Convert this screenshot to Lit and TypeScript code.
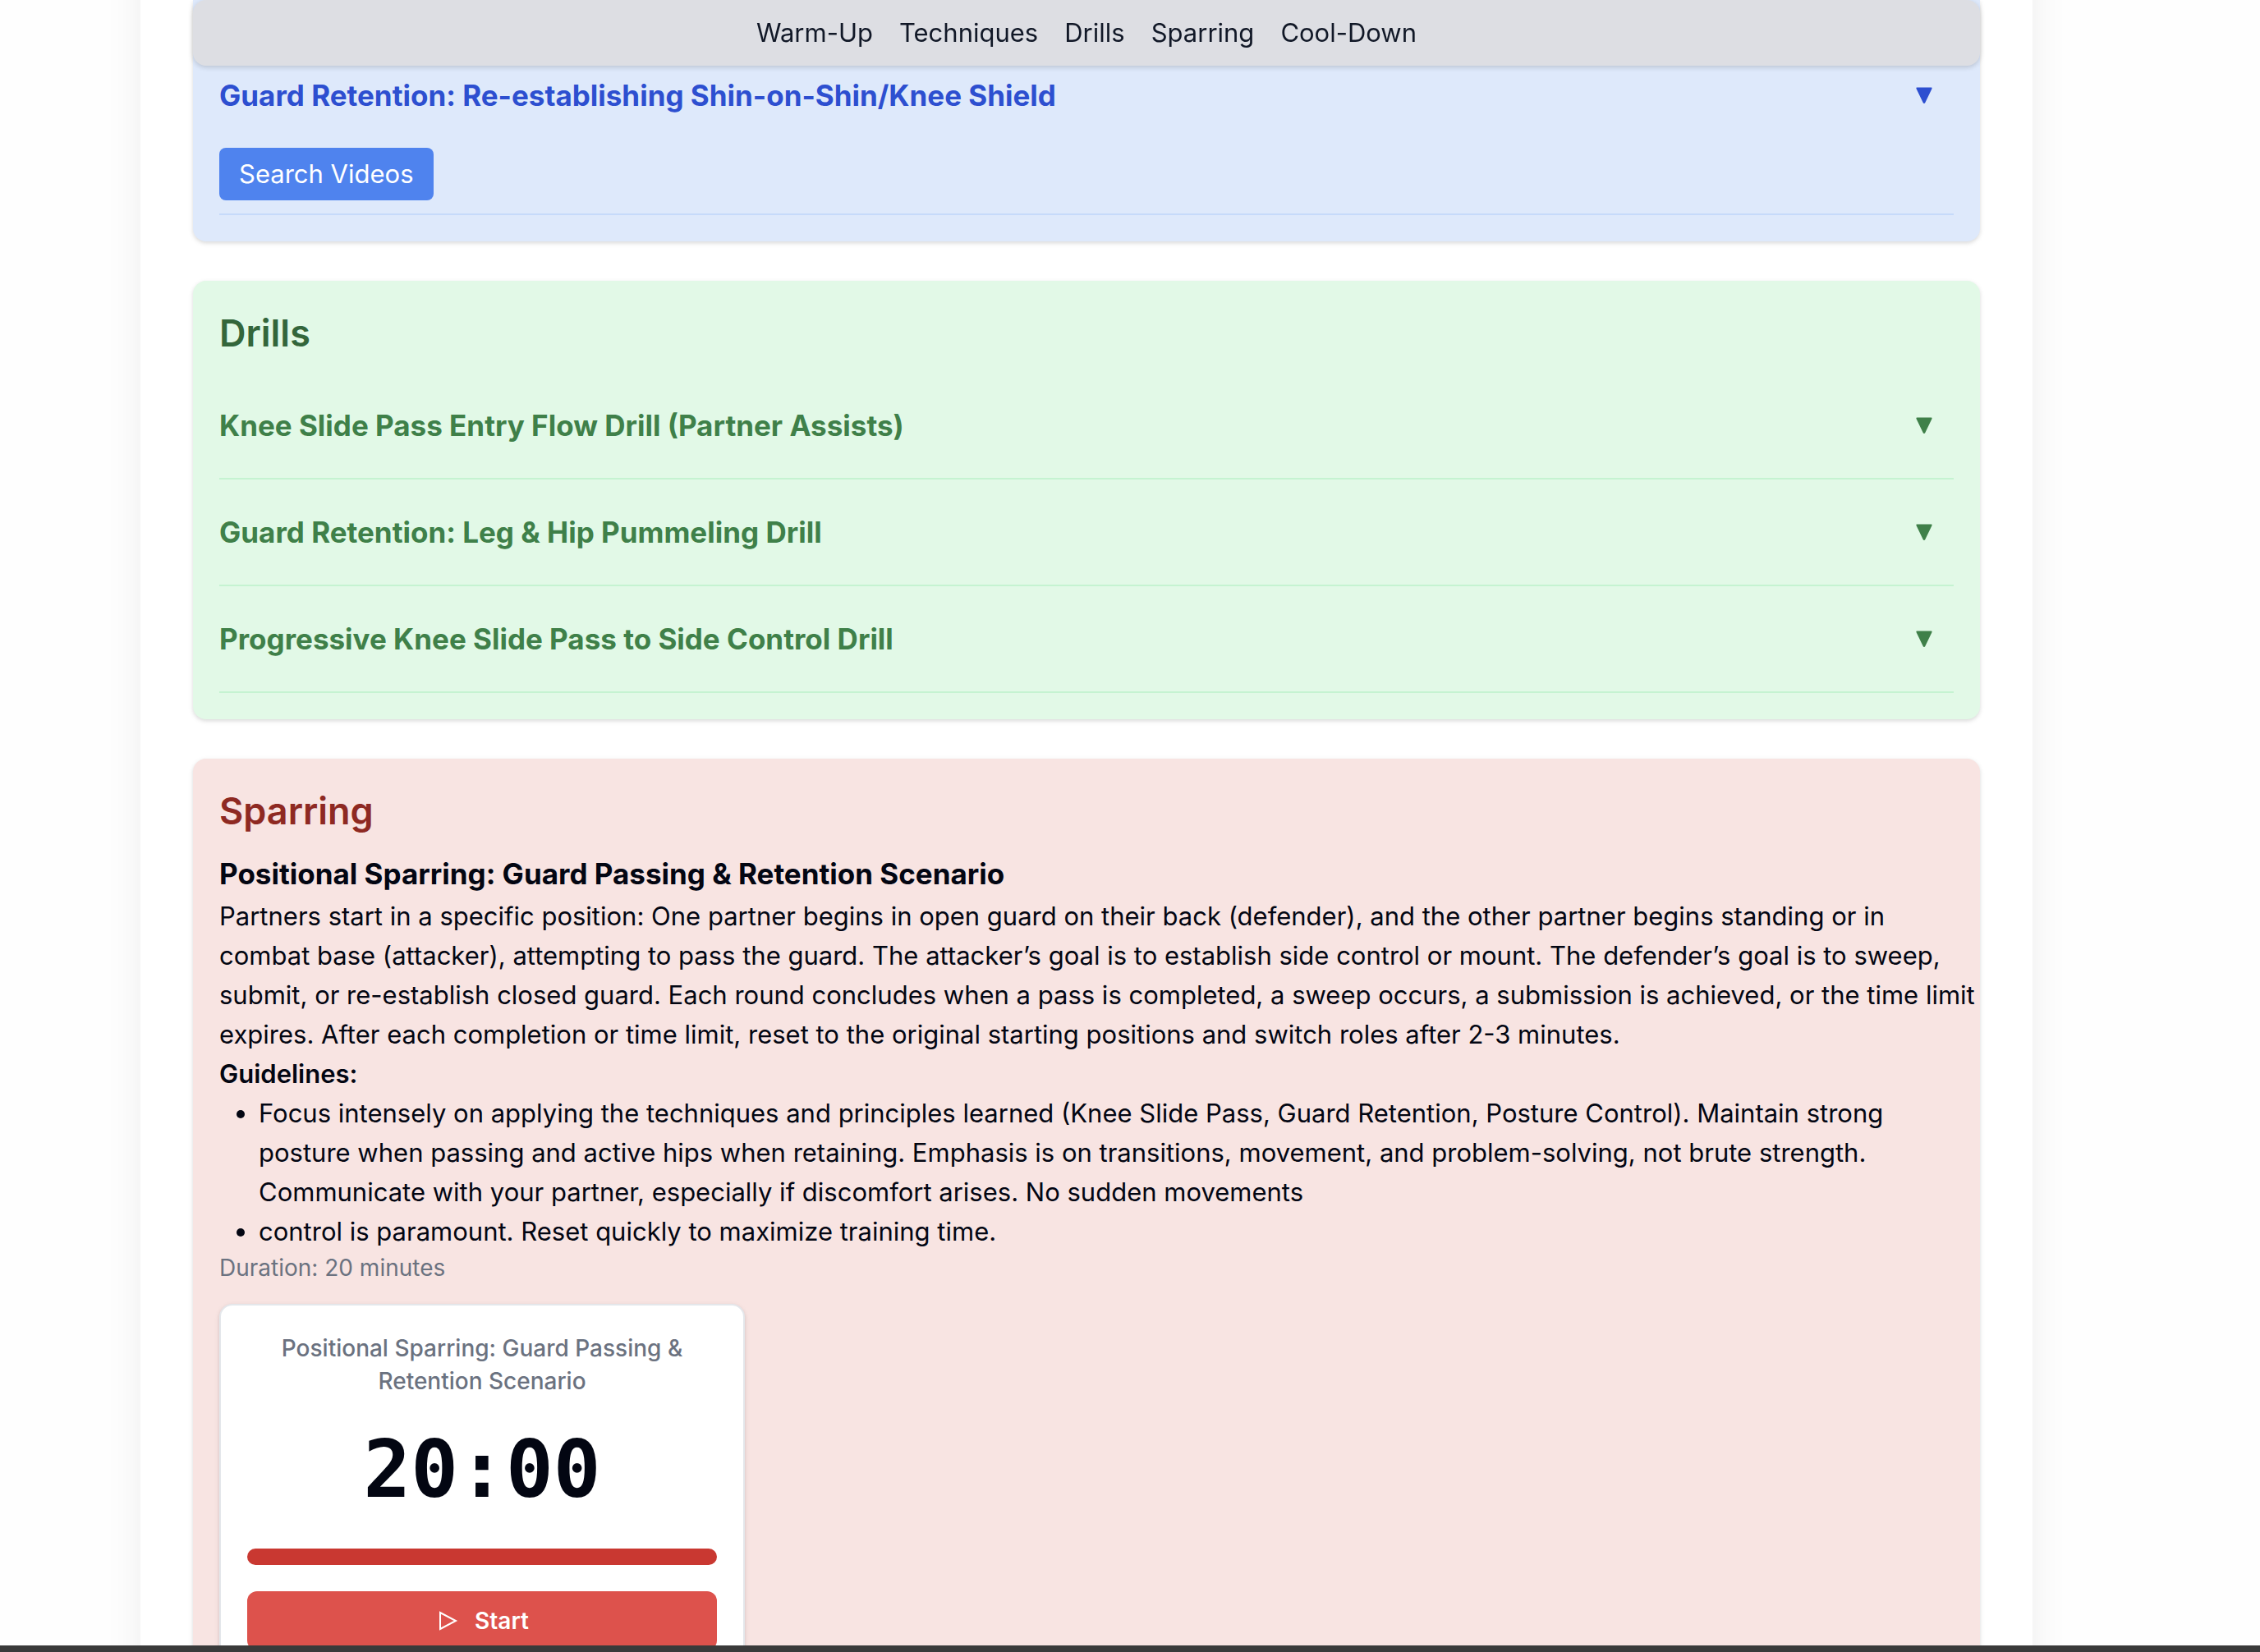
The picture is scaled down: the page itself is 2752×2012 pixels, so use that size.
import { LitElement, html, css, svg } from "lit";
import { customElement, property } from "lit/decorators.js";

const NAV = ["Warm-Up", "Techniques", "Drills", "Sparring", "Cool-Down"];

const DRILLS = [
  "Knee Slide Pass Entry Flow Drill (Partner Assists)",
  "Guard Retention: Leg & Hip Pummeling Drill",
  "Progressive Knee Slide Pass to Side Control Drill",
];

const GUIDELINES = [
  "Focus intensely on applying the techniques and principles learned (Knee Slide Pass, Guard Retention, Posture Control). Maintain strong posture when passing and active hips when retaining. Emphasis is on transitions, movement, and problem-solving, not brute strength. Communicate with your partner, especially if discomfort arises. No sudden movements",
  "control is paramount. Reset quickly to maximize training time.",
];

const triangle = svg`<path d="M3.4 2.500h17.200a1 1 0 0 1 .9 1.400l-8.300 17.400a1.300 1.300 0 0 1-2.400 0L2.500 3.900a1 1 0 0 1 .9-1.400z" fill="currentColor" />`;

@customElement("accordion-item")
export class AccordionItem extends LitElement {
  @property() heading = "";

  static styles = css`
    :host {
      display: block;
      border-bottom: 2px solid var(--rule);
      color: var(--accent);
    }
    .title {
      margin: 0;
      font-size: inherit;
    }
    .toggle {
      display: flex;
      align-items: center;
      justify-content: space-between;
      width: 100%;
      padding: 36px 24px 36px 0;
      border: 0;
      background: none;
      color: inherit;
      font: 700 35px/56px var(--sans);
      text-align: left;
      cursor: pointer;
    }
    .arrow {
      flex: none;
      width: 24px;
      height: 24px;
    }
  `;

  render() {
    return html`
      <h3 class="title">
        <button class="toggle" type="button">
          <span>${this.heading}</span>
          <svg class="arrow" viewBox="0 0 24 24" aria-hidden="true">${triangle}</svg>
        </button>
      </h3>
      <slot></slot>
    `;
  }
}

@customElement("round-timer")
export class RoundTimer extends LitElement {
  @property() label = "";
  @property({ type: Number }) seconds = 0;

  static styles = css`
    :host {
      display: block;
      box-sizing: border-box;
      max-width: 640px;
      padding: 32px;
      border: 2px solid #e4e7eb;
      border-radius: 16px;
      background: #fff;
      box-shadow: 0 2px 6px rgba(0, 0, 0, 0.1), 0 2px 4px rgba(0, 0, 0, 0.06);
      text-align: center;
    }
    .label {
      margin: 0 0 40px;
      padding: 0 32px;
      color: #6b7280;
      font-size: 28px;
      font-weight: 500;
      line-height: 40px;
    }
    .clock {
      margin-bottom: 48px;
      font: 700 96px/96px "DejaVu Sans Mono", monospace;
    }
    .bar {
      height: 20px;
      margin-bottom: 32px;
      border-radius: 10px;
      background: #c93831;
    }
    .start {
      display: flex;
      align-items: center;
      justify-content: center;
      gap: 16px;
      width: 100%;
      height: 72px;
      border: 0;
      border-radius: 12px;
      background: #dd524c;
      color: #fff;
      font: 600 28px/40px var(--sans);
      cursor: pointer;
    }
    .icon {
      width: 32px;
      height: 32px;
    }
  `;

  render() {
    const pad = (n: number) => String(n).padStart(2, "0");
    const time = `${pad(Math.floor(this.seconds / 60))}:${pad(this.seconds % 60)}`;
    return html`
      <p class="label">${this.label}</p>
      <div class="clock" role="timer">${time}</div>
      <div class="bar"></div>
      <button class="start" type="button">
        <svg class="icon" viewBox="0 0 32 32" fill="none" stroke="currentColor" stroke-width="2" aria-hidden="true">
          <path d="M6 6V26L25 16z" />
        </svg>
        Start
      </button>
    `;
  }
}

@customElement("app-root")
export class AppRoot extends LitElement {
  static styles = css`
    :host {
      --sans: Inter, "Liberation Sans", sans-serif;
      display: flex;
      flex-direction: column;
      height: 100vh;
      overflow: hidden;
      background: #fefefe;
      color: #030612;
      font: 400 31px/48px var(--sans);
    }
    .page {
      flex: 1;
      min-height: 0;
      overflow: hidden;
      padding-right: 106px;
    }
    .dock {
      flex: none;
      height: 8px;
      background: #3a3a3a;
    }
    .sheet {
      box-sizing: border-box;
      max-width: 2304px;
      margin: -96px auto 0;
      padding: 96px 64px 64px;
      background: #fff;
      box-shadow: 0 0 50px -10px rgba(0, 0, 0, 0.1);
    }
    .nav {
      position: sticky;
      top: 0;
      z-index: 1;
      display: flex;
      justify-content: center;
      gap: 32px;
      padding: 16px;
      border-radius: 16px;
      background: #dddee3;
      box-shadow: 0 2px 6px rgba(0, 0, 0, 0.12), 0 2px 8px rgba(0, 0, 0, 0.06);
    }
    .link {
      color: #111827;
      text-decoration: none;
    }
    .card {
      margin-bottom: 48px;
      padding: 32px;
      border-radius: 16px;
      box-shadow: 0 2px 6px rgba(0, 0, 0, 0.1), 0 2px 4px rgba(0, 0, 0, 0.06);
    }
    .techniques {
      --accent: #2d4fd0;
      --rule: #c6dafa;
      margin-top: -80px;
      padding-top: 52px;
      border-radius: 0 0 16px 16px;
      background: #dee9fb;
    }
    .drills {
      --accent: #3f8049;
      --rule: #c5f3d1;
      background: #e2f9e7;
    }
    .sparring {
      background: #f8e4e2;
    }
    .heading {
      margin: 0 0 16px;
      font-size: 45px;
      font-weight: 600;
      line-height: 64px;
    }
    .drills .heading {
      color: #33663b;
    }
    .sparring .heading {
      color: #8e2922;
    }
    .search {
      display: block;
      margin-bottom: 16px;
      padding: 8px 24px;
      border: 0;
      border-radius: 8px;
      background: #4f83ee;
      color: #fff;
      font: 400 31px/48px var(--sans);
      cursor: pointer;
    }
    .subheading {
      margin: 0;
      font-size: 35px;
      font-weight: 700;
      line-height: 56px;
    }
    .text {
      margin: 0 -32px 0 0;
    }
    .strong {
      margin: 0;
      font-size: inherit;
      font-weight: 600;
    }
    .list {
      margin: 0;
      padding-left: 48px;
    }
    .duration {
      margin: 0 0 24px;
      color: #6b7280;
      font-size: 28px;
      line-height: 40px;
    }
  `;

  render() {
    return html`
      <main class="page">
        <div class="sheet">
          <nav class="nav">
            ${NAV.map((n) => html`<a class="link" href="#${n.toLowerCase()}">${n}</a>`)}
          </nav>
          <section class="card techniques" id="techniques">
            <accordion-item heading="Guard Retention: Re-establishing Shin-on-Shin/Knee Shield">
              <button class="search" type="button">Search Videos</button>
            </accordion-item>
          </section>
          <section class="card drills" id="drills">
            <h2 class="heading">Drills</h2>
            ${DRILLS.map((d) => html`<accordion-item .heading=${d}></accordion-item>`)}
          </section>
          <section class="card sparring" id="sparring">
            <h2 class="heading">Sparring</h2>
            <h3 class="subheading">Positional Sparring: Guard Passing &amp; Retention Scenario</h3>
            <p class="text">
              Partners start in a specific position: One partner begins in open guard on their back (defender), and the
              other partner begins standing or in<br />
              combat base (attacker), attempting to pass the guard. The attacker’s goal is to establish side control or
              mount. The defender’s goal is to sweep,<br />
              submit, or re-establish closed guard. Each round concludes when a pass is completed, a sweep occurs, a
              submission is achieved, or the time limit<br />
              expires. After each completion or time limit, reset to the original starting positions and switch roles
              after 2-3 minutes.
            </p>
            <h4 class="strong">Guidelines:</h4>
            <ul class="list">
              ${GUIDELINES.map((g) => html`<li>${g}</li>`)}
            </ul>
            <p class="duration">Duration: 20 minutes</p>
            <round-timer
              label="Positional Sparring: Guard Passing &amp; Retention Scenario"
              .seconds=${1200}
            ></round-timer>
          </section>
        </div>
      </main>
      <div class="dock"></div>
    `;
  }
}
